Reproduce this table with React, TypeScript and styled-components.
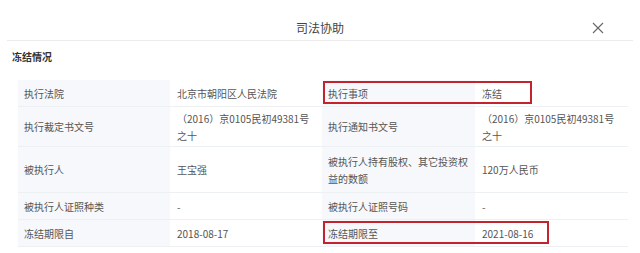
import React from 'react';
import styled, { createGlobalStyle } from 'styled-components';

const GlobalStyle = createGlobalStyle`
  html, body {
    margin: 0;
    padding: 0;
    background: #ffffff;
  }

  body {
    width: 640px;
    height: 253px;
    overflow: hidden;
    font-family: "Noto Sans CJK SC", "Noto Sans", sans-serif;
    color: #555;
  }
`;

const Dialog = styled.div`
  width: 640px;
  height: 253px;
  display: flex;
  flex-direction: column;
`;

const Header = styled.div`
  margin: 0 7px;
  height: 41px;
  border-bottom: 1px solid #ececec;
  display: flex;
  align-items: center;
  justify-content: center;
  position: relative;
  box-sizing: border-box;
  padding-top: 14px;

  h1 {
    margin: 0;
    font-size: 12px;
    font-weight: normal;
    color: #444;
  }
`;

const Close = styled.button`
  position: absolute;
  right: 29px;
  top: 22px;
  width: 12px;
  height: 12px;
  padding: 0;
  border: none;
  background: none;
  display: flex;
`;

const SectionTitle = styled.h2`
  box-sizing: border-box;
  margin: 0;
  padding: 8px 12px 0 12px;
  height: 26px;
  font-size: 10px;
  font-weight: bold;
  line-height: 16px;
  color: #333;
`;

const Table = styled.div`
  margin: 13px 0 0 18px;
  width: 610px;
  display: grid;
  grid-template-columns: 152px 152px 153px 153px;
`;

const Row = styled.div<{ $h: number }>`
  display: contents;

  & > div {
    height: ${p => p.$h}px;
  }
`;

const Cell = styled.div<{ $label?: boolean }>`
  box-sizing: border-box;
  display: flex;
  align-items: center;
  padding: 0 6px 0 ${p => (p.$label ? 6 : 7)}px;
  background: ${p => (p.$label ? '#f6f8fb' : '#ffffff')};
  border-bottom: 1px solid #eef1f4;
  font-size: 10px;
  line-height: 17px;
  color: #555;
  position: relative;
`;

const Mark = styled.span<{ $w: number }>`
  position: absolute;
  left: 1px;
  top: 1px;
  bottom: 2px;
  width: ${p => p.$w}px;
  border: 2px solid #c3232d;
  box-sizing: border-box;
  pointer-events: none;
  z-index: 1;
`;

type Item = { label: React.ReactNode; value: React.ReactNode };

const rows: { h: number; left: Item; right: Item; mark?: number }[] = [
  {
    h: 27,
    left: { label: '执行法院', value: '北京市朝阳区人民法院' },
    right: { label: '执行事项', value: '冻结' },
    mark: 209,
  },
  {
    h: 40,
    left: { label: '执行裁定书文号', value: <>（2016）京0105民初49381号<br />之十</> },
    right: { label: '执行通知书文号', value: <>（2016）京0105民初49381号<br />之十</> },
  },
  {
    h: 46,
    left: { label: '被执行人', value: '王宝强' },
    right: { label: <>被执行人持有股权、其它投资权<br />益的数额</>, value: '120万人民币' },
  },
  {
    h: 27,
    left: { label: '被执行人证照种类', value: '-' },
    right: { label: '被执行人证照号码', value: '-' },
  },
  {
    h: 27,
    left: { label: '冻结期限自', value: '2018-08-17' },
    right: { label: '冻结期限至', value: '2021-08-16' },
    mark: 226,
  },
];

const App = () => {
  return (
    <Dialog>
      <GlobalStyle />
      <Header>
        <h1>司法协助</h1>
        <Close aria-label="关闭">
          <svg width="12" height="12" viewBox="0 0 12 12">
            <path d="M1 1 L11 11 M11 1 L1 11" stroke="#666" strokeWidth="1.1" fill="none" />
          </svg>
        </Close>
      </Header>
      <SectionTitle>冻结情况</SectionTitle>
      <Table>
        {rows.map((r, i) => (
          <Row key={i} $h={r.h}>
            <Cell $label>{r.left.label}</Cell>
            <Cell>{r.left.value}</Cell>
            <Cell $label>
              {r.mark && <Mark $w={r.mark} />}
              {r.right.label}
            </Cell>
            <Cell>{r.right.value}</Cell>
          </Row>
        ))}
      </Table>
    </Dialog>
  );
};

export default App;
